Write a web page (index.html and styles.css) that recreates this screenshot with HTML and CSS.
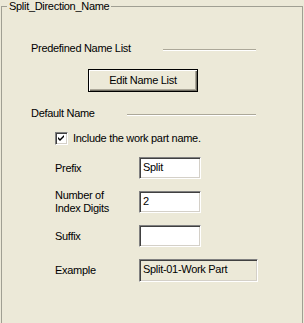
FILE: index.html
```html
<!DOCTYPE html>
<html>
<head>
    <title>Split Direction Name</title>
    <link rel="stylesheet" href="styles.css">
</head>
<body>
    <fieldset class="group">
        <legend>Split_Direction_Name</legend>

        <div class="sectionHead first">
            <span>Predefined Name List</span>
            <div class="etch"></div>
        </div>
        <button class="winButton">Edit Name List</button>

        <div class="sectionHead">
            <span>Default Name</span>
            <div class="etch"></div>
        </div>

        <label class="checkRow">
            <span class="checkBox">
                <svg width="9" height="9" viewBox="0 0 9 9">
                    <path d="M1 3 L3 5 L7 1 L7 3 L3 7 L1 5 Z" fill="#000"/>
                </svg>
            </span>
            <span>Include the work part name.</span>
        </label>

        <div class="formGrid">
            <div class="label">Prefix</div>
            <div class="field">Split</div>

            <div class="label">Number of<br>Index Digits</div>
            <div class="field">2</div>

            <div class="label">Suffix</div>
            <div class="field"></div>

            <div class="label">Example</div>
            <div class="field readOnly">Split-01-Work Part</div>
        </div>
    </fieldset>
</body>
</html>
```

FILE: styles.css
```css
* {
    font-family: "Liberation Sans", Arial, sans-serif;
    font-size: 11px;
    line-height: 13px;
    box-sizing: border-box;
}
html, body {
    margin: 0;
    background-color: #ECE9D8;
    color: #000;
}
.group {
    margin: 0 1px 0 1px;
    padding: 0 46px 45px 0;
    border: 1px solid #A09F93;
}
.group legend {
    margin-left: 5px;
    padding: 0 2px;
    letter-spacing: -0.3px;
}
.sectionHead {
    display: flex;
    align-items: flex-start;
    margin: 15px 0 0 29px;
    letter-spacing: -0.3px;
}
.sectionHead.first {
    margin-top: 29px;
}
.etch {
    flex: 1;
    height: 2px;
    margin: 7px 0 0 32px;
    border-top: 1px solid #ACA899;
    border-bottom: 1px solid #FFF;
}
.winButton {
    display: block;
    width: 110px;
    height: 23px;
    margin: 14px 0 0 86px;
    padding: 0;
    background-color: #ECE9D8;
    border: 1px solid #000;
    box-shadow: inset 1px 1px #FFF, inset -1px -1px #716F64, inset -2px -2px #ACA899;
    letter-spacing: -0.3px;
}
.checkRow {
    display: flex;
    align-items: center;
    gap: 5px;
    margin: 12px 0 0 53px;
    letter-spacing: -0.3px;
}
.checkBox {
    display: flex;
    align-items: center;
    justify-content: center;
    width: 13px;
    height: 13px;
    background-color: #FFF;
    border-top: 1px solid #808080;
    border-left: 1px solid #808080;
    border-right: 1px solid #FFF;
    border-bottom: 1px solid #FFF;
    box-shadow: inset 1px 1px #404040, inset -1px -1px #D4D0C8;
}
.formGrid {
    display: grid;
    grid-template-columns: 84px 62px;
    grid-auto-rows: 22px;
    row-gap: 12px;
    align-items: center;
    margin: 12px 0 0 53px;
    letter-spacing: -0.3px;
}
.field {
    height: 22px;
    padding: 3px 3px 0;
    background-color: #FFF;
    border-top: 1px solid #808080;
    border-left: 1px solid #808080;
    border-right: 1px solid #FFF;
    border-bottom: 1px solid #FFF;
    box-shadow: inset 1px 1px #404040, inset -1px -1px #D4D0C8;
    white-space: nowrap;
}
.field.readOnly {
    width: 119px;
    height: 23px;
    background-color: #ECE9D8;
}
```
